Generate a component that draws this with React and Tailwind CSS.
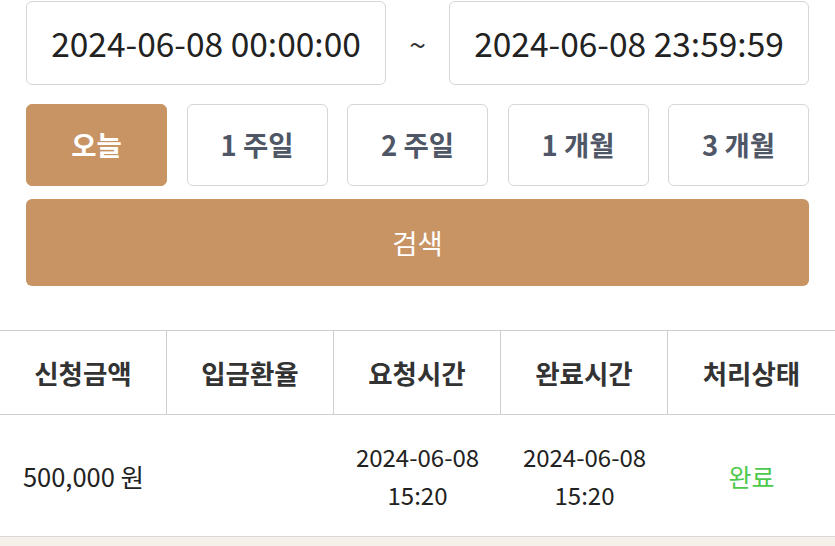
import { useState } from 'react'

const periods = ['오늘', '1 주일', '2 주일', '1 개월', '3 개월']
const columns = ['신청금액', '입금환율', '요청시간', '완료시간', '처리상태']

export default function App() {
  const [active, setActive] = useState(0)

  return (
    <div
      className="w-[835px] h-[546px] overflow-hidden bg-white"
      style={{ fontFamily: '"Noto Sans CJK KR", "Noto Sans", sans-serif' }}
    >
      <div className="px-[26px] pt-px">
        <div className="flex items-center">
          <div className="w-[360px] h-[84px] rounded-[6px] border border-[#d6d6d6] flex items-center justify-center text-[33.5px] text-[#222]">
            2024-06-08 00:00:00
          </div>
          <div className="flex-1 text-center text-[30px] text-[#333]">~</div>
          <div className="w-[360px] h-[84px] rounded-[6px] border border-[#d6d6d6] flex items-center justify-center text-[33.5px] text-[#222]">
            2024-06-08 23:59:59
          </div>
        </div>

        <div className="grid grid-cols-5 gap-[19.5px] mt-[19px]">
          {periods.map((p, i) => (
            <button
              key={p}
              onClick={() => setActive(i)}
              className={
                i === active
                  ? 'h-[82px] rounded-[6px] bg-[#c89464] border border-[#c89464] text-white text-[27.5px] font-bold'
                  : 'h-[82px] rounded-[6px] bg-white border border-[#d6d6d6] text-[#4f5666] text-[27.5px] font-bold'
              }
            >
              {p}
            </button>
          ))}
        </div>

        <button className="w-full h-[87px] mt-[13px] rounded-[6px] bg-[#c89464] text-white text-[27.5px]">
          검색
        </button>
      </div>

      <div className="mt-[44px] border-t border-[#cfcfcf]">
        <div className="grid grid-cols-5 h-[84px] border-b border-[#cfcfcf]">
          {columns.map((c, i) => (
            <div
              key={c}
              className={
                i < 4
                  ? 'flex items-center justify-center border-r border-[#cfcfcf] text-[26.5px] font-bold text-[#333]'
                  : 'flex items-center justify-center text-[26.5px] font-bold text-[#333]'
              }
            >
              {c}
            </div>
          ))}
        </div>
        <div className="grid grid-cols-5 h-[122px] border-b border-[#d8d8d8] text-[24px] text-[#222] leading-[38px]">
          <div className="flex items-center justify-center text-[25.5px]">500,000 원</div>
          <div />
          <div className="flex flex-col items-center justify-center">
            <span>2024-06-08</span>
            <span>15:20</span>
          </div>
          <div className="flex flex-col items-center justify-center">
            <span>2024-06-08</span>
            <span>15:20</span>
          </div>
          <div className="flex items-center justify-center text-[25px] text-[#4cc94c]">완료</div>
        </div>
        <div className="h-[10px] bg-[#f6f0ea]" />
      </div>
    </div>
  )
}
